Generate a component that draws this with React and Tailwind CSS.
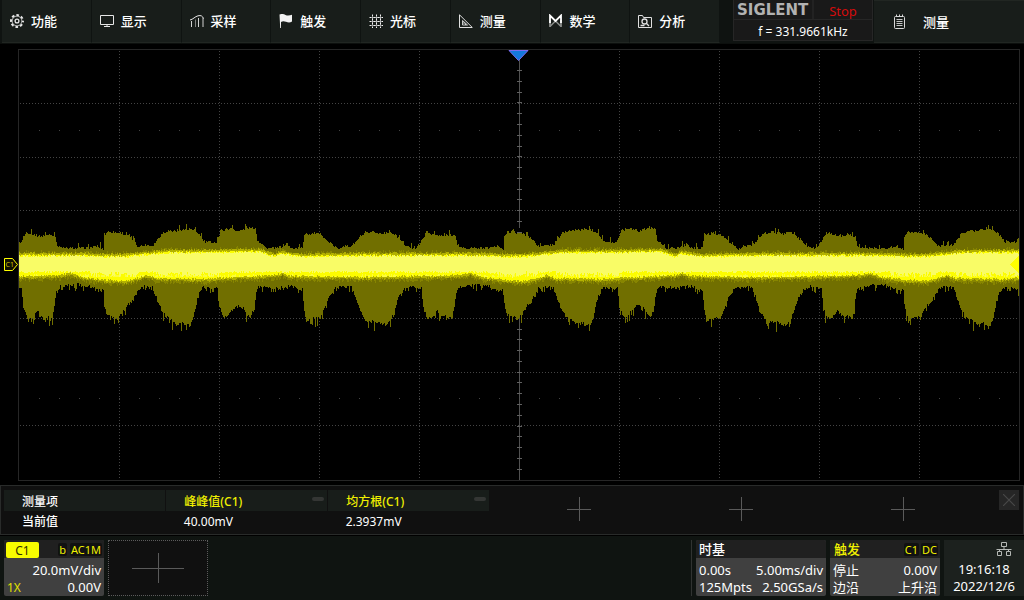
import { useState } from 'react';

const FONT = 'font-["Noto_Sans","Noto_Sans_CJK_SC",sans-serif]';

// The signal repeats every 400 columns, first full period starts at x = 104.
const PERIOD = 400;
const PERIOD_START = 104;

const UPPER = [
  [104, 236], [107, 231], [112, 232], [122, 233], [128, 236], [133, 240], [137, 246], [146, 245],
  [153, 245], [157, 239], [162, 233], [168, 230], [173, 231], [182, 229], [190, 229], [197, 232],
  [202, 239], [205, 242], [216, 242], [218, 237], [221, 230], [230, 228], [238, 231], [248, 228],
  [255, 228], [257, 240], [262, 244], [266, 248], [275, 248], [282, 246], [287, 243], [290, 248],
  [302, 248], [304, 234], [315, 233], [322, 235], [326, 240], [334, 246], [338, 249], [342, 246],
  [350, 246], [356, 241], [360, 236], [365, 233], [373, 232], [383, 234], [389, 231], [395, 235],
  [402, 241], [406, 246], [415, 248], [420, 243], [423, 237], [426, 232], [435, 235], [442, 236],
  [450, 234], [455, 236], [457, 246], [465, 248], [475, 248], [485, 248], [497, 246], [503, 249],
  [504, 236],
];

const LOWER = [
  [104, 302], [106, 313], [110, 316], [117, 318], [122, 313], [126, 306], [131, 301], [134, 295],
  [138, 288], [143, 286], [153, 287], [157, 298], [161, 309], [165, 315], [170, 319], [176, 324],
  [182, 322], [190, 325], [193, 317], [196, 302], [199, 291], [203, 287], [217, 288], [219, 305],
  [223, 316], [226, 317], [232, 309], [238, 304], [242, 307], [247, 313], [250, 317], [253, 310],
  [256, 292], [258, 286], [265, 287], [275, 287], [290, 286], [302, 289], [304, 310], [306, 320],
  [312, 318], [320, 317], [323, 310], [326, 302], [330, 294], [335, 287], [351, 286], [353, 290],
  [357, 302], [360, 311], [364, 318], [367, 322], [372, 321], [380, 323], [386, 325], [390, 320],
  [394, 310], [398, 297], [403, 290], [410, 286], [421, 288], [423, 308], [427, 318], [432, 317],
  [437, 310], [442, 316], [448, 316], [452, 318], [454, 306], [456, 290], [460, 286], [468, 285],
  [480, 284], [490, 286], [496, 289], [503, 290], [504, 302],
];

const CORE_TOP = [
  [104, 255], [125, 255], [145, 253], [165, 251], [200, 251], [260, 250], [268, 253], [275, 255],
  [280, 252], [288, 253], [300, 255], [360, 254], [425, 254], [480, 254], [504, 255],
];

const CORE_BOTTOM = [
  [104, 281], [125, 282], [138, 279], [146, 276], [155, 279], [200, 280], [240, 278], [275, 276],
  [282, 274], [290, 277], [360, 278], [430, 277], [460, 276], [470, 274], [482, 278], [504, 281],
];

function noise(x, seed) {
  const n = Math.sin(x * 127.1 + seed * 311.7) * 43758.5453;
  return n - Math.floor(n);
}

function sample(points, x) {
  const px = ((((x - PERIOD_START) % PERIOD) + PERIOD) % PERIOD) + PERIOD_START;
  for (let i = 1; i < points.length; i++) {
    if (px <= points[i][0]) {
      const [x0, y0] = points[i - 1];
      const [x1, y1] = points[i];
      return y0 + ((y1 - y0) * (px - x0)) / (x1 - x0);
    }
  }
  return points[points.length - 1][1];
}

// One vertical bar per column, joined in a single path
function columns(top, bottom) {
  let d = '';
  for (let x = 19; x < 1019; x++) {
    const t = Math.round(top(x));
    const b = Math.round(bottom(x));
    if (b > t) d += `M${x} ${t}h1V${b}h-1z`;
  }
  return d;
}

const spike = (x, seed, odds, size) => (noise(x, seed) > odds ? size * noise(x, seed + 1) : 0);

const ENVELOPE = columns(
  (x) => sample(UPPER, x) + 1.5 - noise(x, 1) * 2.5 - spike(x, 2, 0.88, 5),
  (x) => {
    const y = sample(LOWER, x);
    return y - 1 + noise(x, 4) * 3 + spike(x, 5, 0.75, y > 305 ? 9 : 5);
  },
);
const HALO = columns(
  (x) => sample(CORE_TOP, x) - 1 - spike(x, 7, 0.5, 3),
  (x) => sample(CORE_BOTTOM, x) + 1 + noise(x, 9) * 4,
);
const HALO_INNER = columns(
  (x) => sample(CORE_TOP, x) - noise(x, 10) * 2,
  (x) => sample(CORE_BOTTOM, x) + noise(x, 11) * 2,
);
const CORE = columns(
  (x) => sample(CORE_TOP, x) + noise(x, 12) * 2,
  (x) => sample(CORE_BOTTOM, x) - noise(x, 13) * 2,
);
const GLOW = columns(
  (x) => sample(CORE_TOP, x) + 1 + noise(x, 14) * 2,
  (x) => 271 + noise(x, 15) * 2 + (sample(CORE_BOTTOM, x) > 279 ? noise(x, 16) * 5 : 0),
);
const SPECKLE = columns(
  (x) => 274 + noise(x, 17) * 2,
  (x) => (noise(x, 18) > 0.5 ? Math.min(277, sample(CORE_BOTTOM, x) - 1) : 0),
);

const range = (n) => Array.from({ length: n }, (_, i) => i);

function GearIcon() {
  return (
    <svg viewBox="0 0 14 14" className="size-3.5" fill="none" stroke="#e6e6e6">
      <circle cx="7" cy="7" r="6" strokeWidth="2" strokeDasharray="2.6 2.112" strokeDashoffset="1.3" />
      <circle cx="7" cy="7" r="4.9" strokeWidth="0.8" />
      <circle cx="7" cy="7" r="1.9" strokeWidth="1.3" />
    </svg>
  );
}

function DisplayIcon() {
  return (
    <svg viewBox="0 0 14 14" className="size-3.5" fill="none" stroke="#e6e6e6">
      <path d="M0.5 1.5h13v9h-13zM7 10.5v2M4 12.5h6" />
    </svg>
  );
}

function AcquireIcon() {
  return (
    <svg viewBox="0 0 14 14" className="size-3.5" fill="none" stroke="#e6e6e6">
      <path d="M0 6C3 5.500 5 2.500 8 1.800S12.500 2 13.500 4.500" />
      <path d="M1.500 7v6M8.500 4v9M13 4v9" strokeWidth="0.9" />
      <path d="M5.500 5.500v7.500" strokeWidth="0.5" />
    </svg>
  );
}

function TriggerIcon() {
  return (
    <svg viewBox="0 0 14 14" className="size-3.5" fill="#f2f2f2">
      <path d="M0.500 0.500C3-0.500 4.500 0 6.500 1S11 1.500 13 0.800V7.500C11 8.800 9 8.500 7 7.800S3.500 7 2 8V14H1.200z" />
    </svg>
  );
}

function CursorIcon() {
  return (
    <svg viewBox="0 0 14 14" className="size-3.5" fill="none" stroke="#f0f0f0">
      <path d="M3.500 0v14M7.500 0v14M11.500 0v14" strokeDasharray="2 2" strokeDashoffset="-0.500" />
      <path d="M0 3.500h14M0 7.500h14M0 11.500h14" strokeDasharray="2 2" strokeDashoffset="-0.500" />
      <path d="M3.500 2.500v9M7.500 2.500v9M11.500 2.500v9M2.500 3.500h10M2.500 7.500h10M2.500 11.500h10" strokeWidth="0.500" />
    </svg>
  );
}

function MeasureIcon() {
  return (
    <svg viewBox="0 0 14 14" className="size-3.5" fill="none" stroke="#e0e0e0">
      <path d="M0.500 0.800V13.500H13.300z" />
      <path d="M3.500 6.500v4.500h5z" strokeWidth="0.9" />
      <path d="M5 8v2M6.500 9.500v1.500" strokeWidth="0.9" />
    </svg>
  );
}

function MathIcon() {
  return (
    <svg viewBox="0 0 14 14" className="size-3.5">
      <path d="M1 6v7M12 6v7" stroke="#8a8d8b" strokeWidth="1.800" />
      <path d="M1 12.500L6.500 7 12 12.500" fill="none" stroke="#8a8d8b" strokeWidth="1.500" />
      <path d="M1 9V1.500L6.500 7 12 1.500V9" fill="none" stroke="#ffffff" strokeWidth="1.800" />
    </svg>
  );
}

function AnalysisIcon() {
  return (
    <svg viewBox="0 0 14 14" className="size-3.5" fill="none" stroke="#e0e0e0">
      <path d="M0.500 13.500v-12h4l1 2h8v10z" />
      <circle cx="6.500" cy="7.500" r="2.500" strokeWidth="1.300" />
      <path d="M8.300 9.300l2.700 2.700M2.500 11.500h4" strokeWidth="1.300" />
    </svg>
  );
}

function NotepadIcon() {
  return (
    <svg viewBox="0 0 11 15" className="h-[15px] w-[11px]" fill="none" stroke="#d8d8d8">
      <path d="M1.500 2.500h8a1 1 0 0 1 1 1v10a1 1 0 0 1-1 1h-8a1 1 0 0 1-1-1v-10a1 1 0 0 1 1-1z" />
      <path d="M2.500 0.500v2M5.500 0.500v2M8.500 0.500v2" />
      <path d="M2.500 5.500h6M2.500 7.500h6M2.500 9.500h6M2.500 11.500h6" strokeWidth="0.900" />
    </svg>
  );
}

function NetworkIcon() {
  return (
    <svg viewBox="0 0 16 16" className="size-4" fill="none" stroke="#b4b8b5">
      <path d="M5.500 1.500h5v4h-5zM8 5.500v3M0.500 8.500h15M3.500 8.500v2M12.500 8.500v2M1.500 10.500h4v4h-4zM10.500 10.500h4v4h-4z" />
    </svg>
  );
}

const MENU = [
  { label: '功能', Icon: GearIcon },
  { label: '显示', Icon: DisplayIcon },
  { label: '采样', Icon: AcquireIcon },
  { label: '触发', Icon: TriggerIcon },
  { label: '光标', Icon: CursorIcon },
  { label: '测量', Icon: MeasureIcon },
  { label: '数学', Icon: MathIcon },
  { label: '分析', Icon: AnalysisIcon },
];

const MEASUREMENTS = [
  { name: '峰峰值(C1)', value: '40.00mV' },
  { name: '均方根(C1)', value: '2.3937mV' },
];

function Plus({ className }) {
  return (
    <svg className={className} viewBox="0 0 24 24" preserveAspectRatio="none" stroke="#5a5a5a" shapeRendering="crispEdges">
      <path d="M0 12h24M12 0v24" vectorEffect="non-scaling-stroke" />
    </svg>
  );
}

function TopBar() {
  return (
    <header className="flex h-11 shrink-0 justify-between border-b border-[#0c0f0d] bg-[#0f1311] pl-0.5">
      <nav className="flex w-[718px]">
        {MENU.map(({ label, Icon }) => (
          <button
            key={label}
            type="button"
            className="flex flex-1 items-center gap-[7px] border-r border-b border-r-[#0f1311] border-b-[#212622] bg-[#181d1a] pl-2 text-[13px] font-medium text-white"
          >
            <Icon />
            <span className="pt-0.5">{label}</span>
          </button>
        ))}
      </nav>
      <div className="flex gap-px">
        <div className="flex h-[41px] w-[140px] flex-col border border-t-0 border-[#262626] bg-[#191919]">
          <div className="flex h-5 border-b border-[#262626]">
            <div className="w-20 border-r-2 border-[#222222] pl-[3px] font-[DejaVu_Sans] text-[15px] leading-5 font-bold text-[#b2b2b2]">
              SIGLENT
            </div>
            <div className="flex-1 text-center text-[13px] leading-[23px] text-[#d40c0c]">Stop</div>
          </div>
          <div className="text-center text-[12px] leading-[23px] text-white">f = 331.9661kHz</div>
        </div>
        <button
          type="button"
          className="flex w-[150px] items-center gap-[18px] border-t border-b border-[#212622] bg-[#181d1a] pl-5 text-[13px] font-medium text-white"
        >
          <NotepadIcon />
          <span className="pt-0.5">测量</span>
        </button>
      </div>
    </header>
  );
}

function Graticule() {
  return (
    <svg viewBox="18 49 1002 432" preserveAspectRatio="none" className="h-full w-full min-w-0" shapeRendering="crispEdges">
      <rect x="18.500" y="49.500" width="1001" height="431" fill="#000000" stroke="#262626" />
      <g stroke="#444444" strokeDasharray="1 2">
        {[119, 219, 319, 419, 619, 719, 819, 919].map((x) => (
          <path key={x} d={`M${x + 0.5} 51V479`} />
        ))}
        {[103, 157, 210, 264, 318, 372, 425].map((y) => (
          <path key={y} d={`M20 ${y + 0.5}H1018`} />
        ))}
      </g>
      <g stroke="#444444" strokeDasharray="1 19">
        <path d="M39 130.500H1018" />
        <path d="M39 398.500H1018" />
      </g>
      <path d={ENVELOPE} fill="#716f00" />
      <path d={HALO} fill="#878500" />
      <path d={HALO_INNER} fill="#b3b100" />
      <path d={CORE} fill="#fcfc00" />
      <path d={SPECKLE} fill="#fbfc3c" />
      <path d={GLOW} fill="#f9fc66" />
      <path d="M519.500 60V228M519.500 318V480" stroke="#505050" />
      {range(39).map((i) => {
        const y = Math.floor(264.5 + (i - 19) * 10.77) + 0.5;
        if (y < 62 || (y > 238 && y < 322)) return null;
        return <path key={i} d={`M517 ${y}h5`} stroke="#606060" />;
      })}
      <path d="M1019 256v17l-9-8.500z" fill="#ffff00" />
    </svg>
  );
}

function Scope() {
  return (
    <main className="relative flex min-h-0 flex-1 bg-black pt-[5px] pr-1 pb-1">
      <div className="flex w-[18px] shrink-0 items-center pl-1">
        <svg viewBox="0 0 14 14" className="size-3.5">
          <path d="M0.500 0.500h8l5 6-5 6h-8z" fill="#101000" stroke="#ffff00" />
          <text x="1.500" y="9" fontSize="7" fontFamily="Noto Sans" fill="#d0c000">C1</text>
        </svg>
      </div>
      <Graticule />
      {/* trigger position */}
      <div className="absolute inset-x-0 top-1.5 flex justify-center pr-1.5 pl-[18px]">
        <svg viewBox="0 0 21 11" className="h-[11px] w-[21px]">
          <path d="M1 0.500h19l-9.500 10z" fill="#1478dc" stroke="#7d6cf0" />
        </svg>
      </div>
    </main>
  );
}

function MeasurePanel() {
  const [open, setOpen] = useState(true);
  if (!open) return null;

  return (
    <section className="flex h-[50px] shrink-0 border border-[#292b2a] bg-[#101010] pt-1 pl-[3px] text-[12px] text-white">
      <table className="h-10 w-[486px] shrink-0 table-fixed border-collapse text-left">
        <thead>
          <tr className="h-5 bg-[#181d1a]">
            <th scope="col" className="border-r border-[#101010] p-0 pt-0.5 pl-[18px] leading-[18px] font-medium">测量项</th>
            {MEASUREMENTS.map((m) => (
              <th key={m.name} scope="col" className="border-r border-[#101010] p-0 pt-0.5 pl-[18px] leading-[18px] font-medium text-[#f0f000]">
                <div className="flex items-start justify-between pr-[3px]">
                  <span className="pt-px">{m.name}</span>
                  <button type="button" aria-label="移除" className="mt-[5px] h-1 w-3 rounded-sm bg-[#343634]" />
                </div>
              </th>
            ))}
          </tr>
        </thead>
        <tbody>
          <tr className="h-5">
            <th scope="row" className="p-0 pt-0.5 pl-[18px] leading-[18px] font-medium">当前值</th>
            {MEASUREMENTS.map((m) => (
              <td key={m.name} className="p-0 pt-0.5 pl-[18px] leading-[18px]">{m.value}</td>
            ))}
          </tr>
        </tbody>
      </table>
      <div className="flex flex-1 pl-2">
        {range(3).map((i) => (
          <button key={i} type="button" aria-label="添加" className="flex h-[38px] w-[162px] items-center justify-center">
            <Plus className="size-6" />
          </button>
        ))}
      </div>
      <button
        type="button"
        aria-label="关闭"
        onClick={() => setOpen(false)}
        className="mr-1 flex size-5 items-center justify-center bg-[#262626]"
      >
        <svg viewBox="0 0 12 12" className="size-3" stroke="#484848" strokeWidth="1.200">
          <path d="M0 0l12 12M12 0L0 12" />
        </svg>
      </button>
    </section>
  );
}

function Row({ left, right, leftClass }) {
  return (
    <div className="flex justify-between">
      <span className={leftClass}>{left}</span>
      <span>{right}</span>
    </div>
  );
}

function Chip({ children }) {
  return <span className="rounded-xs bg-[#111111] px-px leading-[13px]">{children}</span>;
}

function StatusBar() {
  return (
    <footer className="flex h-[65px] shrink-0 gap-1 border-t border-black bg-[#0f1411] pt-1 pb-1 pl-1 text-[13px] text-white">
      <button type="button" className="flex h-14 w-[100px] flex-col overflow-hidden rounded-xs bg-[#404040]">
        <span className="flex h-[18px] w-full items-end bg-[#202020] pl-0.5 text-[11px]">
          <span className="h-4 w-[33px] rounded-xs bg-[#f8fc00] text-center text-[12px] leading-[17px] text-[#303000]">C1</span>
          <span className="flex flex-1 items-center justify-end gap-[3px] self-center pr-0.5 text-[#f0f000]">
            <Chip>b</Chip>
            <Chip>AC1M</Chip>
          </span>
        </span>
        <span className="flex w-full flex-col pt-1 pr-[3px] pl-[3px] leading-[17px]">
          <Row left="" right="20.0mV/div" />
          <Row left="1X" right="0.00V" leftClass="text-[12px] text-[#e0e000]" />
        </span>
      </button>
      <button
        type="button"
        aria-label="添加通道"
        className="flex h-14 w-[100px] items-center justify-center border border-dotted border-[#5c5c5c] bg-[#101010]"
      >
        <Plus className="h-[30px] w-[52px]" />
      </button>
      <div className="ml-auto h-14 w-px bg-[#303331]" />
      <button type="button" className="h-14 w-[130px] overflow-hidden rounded-xs bg-[#404040] text-left">
        <div className="h-[18px] bg-[#202020] pl-[3px] leading-[19px] font-medium">时基</div>
        <div className="px-[3px] pt-1 leading-[17px]">
          <Row left="0.00s" right="5.00ms/div" />
          <Row left="125Mpts" right="2.50GSa/s" />
        </div>
      </button>
      <button type="button" className="h-14 w-[110px] overflow-hidden rounded-xs bg-[#404040] text-left">
        <div className="flex h-[18px] items-center justify-between bg-[#202020] pr-0.5 pl-1 leading-[19px] font-medium text-[#f0f000]">
          触发
          <span className="flex gap-0.5 text-[11px] font-normal">
            <Chip>C1</Chip>
            <Chip>DC</Chip>
          </span>
        </div>
        <div className="px-[3px] pt-1 leading-[17px]">
          <Row left="停止" right="0.00V" />
          <Row left="边沿" right="上升沿" />
        </div>
      </button>
      <div className="flex h-14 w-20 flex-col items-center bg-[#1c211e] leading-[17px]">
        <div className="flex h-[21px] w-full justify-end pt-px pr-3">
          <NetworkIcon />
        </div>
        <time>19:16:18</time>
        <time>2022/12/6</time>
      </div>
    </footer>
  );
}

export default function App() {
  return (
    <div className={`flex h-screen flex-col overflow-hidden bg-black ${FONT}`}>
      <TopBar />
      <Scope />
      <MeasurePanel />
      <StatusBar />
    </div>
  );
}
